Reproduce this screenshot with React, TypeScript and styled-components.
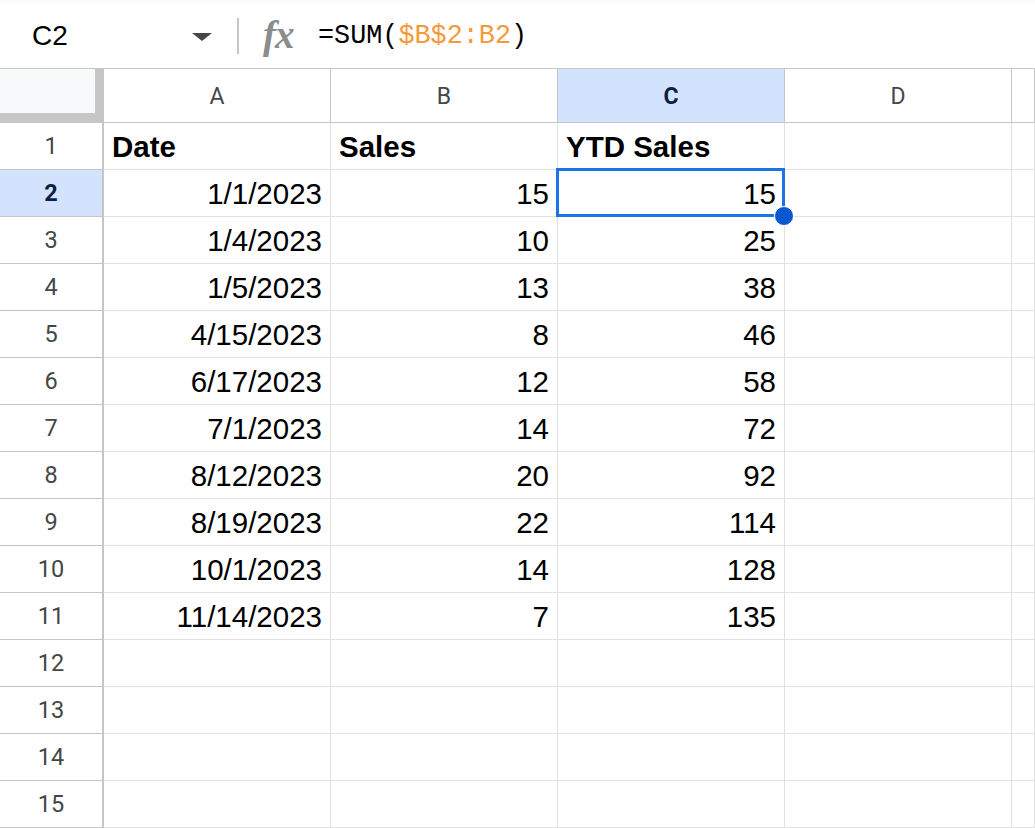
import React from "react";
import styled, { createGlobalStyle } from "styled-components";

const GlobalStyle = createGlobalStyle`
	html, body {
		margin: 0;
		padding: 0;
		background: #ffffff;
		overflow: hidden;
	}
	body {
		width: 1035px;
		height: 828px;
	}
`;

const COLUMNS = ["A", "B", "C", "D", ""];
const SELECTED_COL = 2;
const SELECTED_ROW = 2;

const rows: [string, string, string][] = [
	["1/1/2023", "15", "15"],
	["1/4/2023", "10", "25"],
	["1/5/2023", "13", "38"],
	["4/15/2023", "8", "46"],
	["6/17/2023", "12", "58"],
	["7/1/2023", "14", "72"],
	["8/12/2023", "20", "92"],
	["8/19/2023", "22", "114"],
	["10/1/2023", "14", "128"],
	["11/14/2023", "7", "135"],
];

const TOTAL_ROWS = 15;

const App = () => {
	const bodyRows: string[][] = [["Date", "Sales", "YTD Sales", "", ""]];
	rows.forEach((r) => bodyRows.push([...r, "", ""]));
	while (bodyRows.length < TOTAL_ROWS) bodyRows.push(["", "", "", "", ""]);

	return (
		<>
			<GlobalStyle />
			<Page>
				<Toolbar>
					<NameBox>
						<span>C2</span>
						<Caret />
					</NameBox>
					<Divider />
					<FxIcon>fx</FxIcon>
					<Formula>
						=SUM(<RangeRef>$B$2:B2</RangeRef>)
					</Formula>
				</Toolbar>
				<Grid>
					<Corner>
						<CornerInner />
					</Corner>
					{COLUMNS.map((c, i) => (
						<ColHeader key={"h" + i} selected={i === SELECTED_COL}>
							{c}
						</ColHeader>
					))}
					{bodyRows.map((row, ri) => {
						const rowNum = ri + 1;
						return (
							<React.Fragment key={"r" + ri}>
								<RowHeader selected={rowNum === SELECTED_ROW}>{rowNum}</RowHeader>
								{row.map((value, ci) => (
									<Cell
										key={ci}
										bold={rowNum === 1}
										alignRight={rowNum > 1}
										active={rowNum === SELECTED_ROW && ci === SELECTED_COL}
									>
										{value}
									</Cell>
								))}
							</React.Fragment>
						);
					})}
				</Grid>
			</Page>
		</>
	);
};

export default App;

const Page = styled.div`
	width: 1035px;
	height: 828px;
	overflow: hidden;
	background: #ffffff;
`;

const Toolbar = styled.div`
	display: flex;
	align-items: center;
	height: 64px;
	border-top: 4px solid #f9fbfd;
	background: #ffffff;
`;

const NameBox = styled.div`
	display: flex;
	align-items: center;
	justify-content: space-between;
	box-sizing: border-box;
	width: 224px;
	padding: 0 12px 0 32px;
	font-family: "Liberation Sans", Arial, sans-serif;
	font-size: 28px;
	color: #000000;
`;

const Caret = styled.div`
	width: 0;
	height: 0;
	border-left: 10px solid transparent;
	border-right: 10px solid transparent;
	border-top: 8px solid #444746;
	margin-top: 2px;
`;

const Divider = styled.div`
	width: 2px;
	height: 36px;
	margin-left: 13px;
	background: #c4c7c5;
`;

const FxIcon = styled.div`
	margin-left: 24px;
	width: 38px;
	font-family: "Liberation Serif", "Times New Roman", serif;
	font-style: italic;
	font-weight: bold;
	font-size: 39px;
	letter-spacing: -1px;
	color: #8a8c8e;
	line-height: 1;
	margin-top: -4px;
`;

const Formula = styled.div`
	margin-left: 17px;
	font-family: "Liberation Mono", "Courier New", monospace;
	font-size: 26.8px;
	color: #000000;
	white-space: pre;
`;

const RangeRef = styled.span`
	color: #f5993a;
`;

const Grid = styled.div`
	display: grid;
	grid-template-columns: 104px 227px 227px 227px 227px 1fr;
	grid-template-rows: 54px;
	grid-auto-rows: 47px;
	border-top: 1px solid #c4c7c5;
`;

const Corner = styled.div`
	background: #c4c7c5;
	box-sizing: border-box;
	padding: 0 9px 10px 0;
`;

const CornerInner = styled.div`
	width: 100%;
	height: 100%;
	background: #f8f9fa;
`;

const ColHeader = styled.div<{ selected?: boolean }>`
	display: flex;
	align-items: center;
	justify-content: center;
	box-sizing: border-box;
	border-right: 1px solid #c4c7c5;
	border-bottom: 1px solid #c4c7c5;
	background: ${(p) => (p.selected ? "#d3e3fd" : "#ffffff")};
	color: ${(p) => (p.selected ? "#0b1f44" : "#444746")};
	font-weight: ${(p) => (p.selected ? "bold" : "normal")};
	font-family: Roboto, "Liberation Sans", Arial, sans-serif;
	font-size: 23px;
	padding-top: 2px;
`;

const RowHeader = styled.div<{ selected?: boolean }>`
	display: flex;
	align-items: center;
	justify-content: center;
	box-sizing: border-box;
	border-right: 2px solid #c4c7c5;
	border-bottom: 1px solid #c4c7c5;
	background: ${(p) => (p.selected ? "#d3e3fd" : "#ffffff")};
	color: ${(p) => (p.selected ? "#0b1f44" : "#444746")};
	font-weight: ${(p) => (p.selected ? "bold" : "normal")};
	font-family: Roboto, "Liberation Sans", Arial, sans-serif;
	font-size: 23.5px;
`;

const Cell = styled.div<{ bold?: boolean; alignRight?: boolean; active?: boolean }>`
	position: relative;
	display: flex;
	align-items: center;
	justify-content: ${(p) => (p.alignRight ? "flex-end" : "flex-start")};
	box-sizing: border-box;
	padding: 2px 8px 0 8px;
	border-right: 1px solid #e1e1e1;
	border-bottom: 1px solid #e1e1e1;
	font-family: "Liberation Sans", Arial, sans-serif;
	font-size: 29.5px;
	font-weight: ${(p) => (p.bold ? "bold" : "normal")};
	color: #000000;
	white-space: nowrap;

	${(p) =>
		p.active &&
		`
		&::after {
			content: "";
			position: absolute;
			left: -2px;
			top: -2px;
			right: -1px;
			bottom: -1px;
			border: 3px solid #1a73e8;
			pointer-events: none;
		}
		&::before {
			content: "";
			position: absolute;
			right: -10px;
			bottom: -10px;
			width: 18px;
			height: 18px;
			border-radius: 50%;
			background: #0b57d0;
			border: 1px solid #ffffff;
			z-index: 2;
		}
	`}
`;
